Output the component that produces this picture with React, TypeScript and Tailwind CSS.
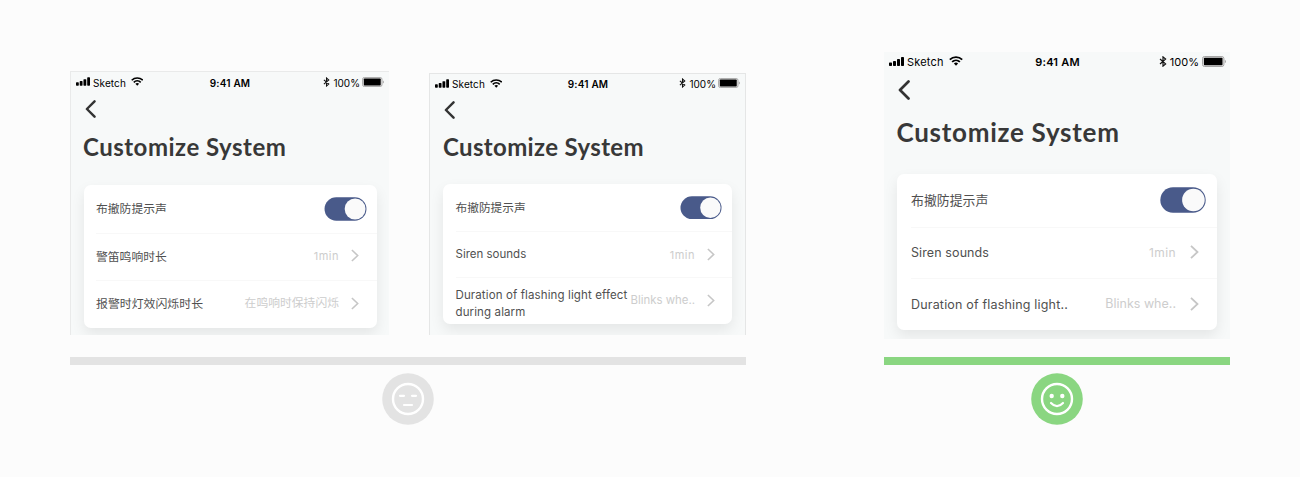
import React from "react";

type Row = { label: React.ReactNode; value?: string; labelClass: string; valueClass?: string; rowClass: string };

type PhoneProps = {
  frame: string;
  status: string;
  carrier: string;
  time: string;
  percent: string;
  iconSignal: string;
  iconWifi: string;
  iconBluetooth: string;
  iconBattery: string;
  back: string;
  title: string;
  card: string;
  toggle: string;
  arrow: string;
  rows: Row[];
};

function Signal({ className }: { className: string }) {
  return (
    <svg viewBox="0 0 15 9" className={className} fill="#000">
      <rect x="0" y="5.4" width="3" height="3.6" rx="0.7" />
      <rect x="4" y="4" width="3" height="5" rx="0.7" />
      <rect x="8" y="2" width="3" height="7" rx="0.7" />
      <rect x="12" y="0" width="3" height="9" rx="0.7" />
    </svg>
  );
}

function Wifi({ className }: { className: string }) {
  return (
    <svg viewBox="0 0 14 10" className={className} fill="none" stroke="#000" strokeWidth="1.8">
      <path d="M0.8 3.6a8.9 8.9 0 0 1 12.4 0" />
      <path d="M3.1 5.9a5.7 5.7 0 0 1 7.8 0" />
      <path d="M4.9 7.5a3.2 3.2 0 0 1 4.2 0L7 9.7z" fill="#000" stroke="none" />
    </svg>
  );
}

function Bluetooth({ className }: { className: string }) {
  return (
    <svg viewBox="0 0 8 11" className={className} fill="none" stroke="#111" strokeWidth="1.2">
      <path d="M1 3l5.6 4.9L4 10.1V0.9l2.6 2.2L1 8" />
    </svg>
  );
}

function Battery({ className }: { className: string }) {
  return (
    <svg viewBox="0 0 24 11" className={className}>
      <rect x="0.5" y="0.5" width="21.4" height="10" rx="2" fill="#e6e6e6" stroke="#a6a6a6" />
      <rect x="1.9" y="1.7" width="18.6" height="7.6" rx="0.7" fill="#000" />
      <path d="M22.8 3.8q1.2 0.4 1.2 1.7t-1.2 1.7z" fill="#a6a6a6" />
    </svg>
  );
}

function Arrow({ className }: { className: string }) {
  return (
    <svg viewBox="0 0 9 14" className={className} fill="none" stroke="#c6c6c6" strokeWidth="1.8">
      <path d="M1 0.8l6.5 6.2L1 13.2" />
    </svg>
  );
}

function Toggle({ className }: { className: string }) {
  return (
    <svg viewBox="0 0 46 26" className={className}>
      <rect x="0.3" y="0.3" width="45.4" height="25.4" rx="12.7" fill="#495a8a" />
      <circle cx="33.4" cy="13" r="11.3" fill="#fafafa" />
    </svg>
  );
}

function Phone(p: PhoneProps) {
  return (
    <section className={`shrink-0 overflow-hidden bg-[#f7f9f9] ${p.frame}`}>
      <div className={`grid grid-cols-[1fr_auto_1fr] items-center whitespace-nowrap text-black ${p.status}`}>
        <div className="flex items-center">
          <Signal className={p.iconSignal} />
          <span className={p.carrier}>Sketch</span>
          <Wifi className={p.iconWifi} />
        </div>
        <span className={`font-semibold ${p.time}`}>9:41 AM</span>
        <div className="flex items-center justify-end">
          <Bluetooth className={p.iconBluetooth} />
          <span className={p.percent}>100%</span>
          <Battery className={p.iconBattery} />
        </div>
      </div>
      <svg viewBox="0 0 12 20" className={p.back} fill="none" stroke="#333" strokeWidth="2.7" strokeLinecap="round" strokeLinejoin="round">
        <path d="M10.5 1.5L2 10l8.5 8.5" />
      </svg>
      <h1 className={`font-['Lato',sans-serif] font-bold whitespace-nowrap text-[#383838] ${p.title}`}>Customize System</h1>
      <div className={`bg-white shadow-[0_6px_14px_rgba(0,0,0,0.08)] ${p.card}`}>
        {p.rows.map((r, i) => (
          <div key={i} className={`flex items-center whitespace-nowrap ${i > 0 ? "border-t border-[#f8f8f8]" : ""} ${r.rowClass}`}>
            <span className={`text-[#505050] ${r.labelClass}`}>{r.label}</span>
            {r.value ? (
              <>
                <span className={`ml-auto text-[#cdcdcd] ${r.valueClass}`}>{r.value}</span>
                <Arrow className={p.arrow} />
              </>
            ) : (
              <Toggle className={p.toggle} />
            )}
          </div>
        ))}
      </div>
    </section>
  );
}

function Verdict({ good }: { good: boolean }) {
  return (
    <svg viewBox="0 0 52 52" className="mx-auto mt-2 h-[52px] w-[52px]">
      <circle cx="26" cy="26" r="25.8" fill={good ? "#8ad681" : "#e3e3e3"} />
      <circle cx="26" cy="26" r="15" fill="none" stroke="#fff" strokeWidth="2.4" />
      {good ? (
        <>
          <circle cx="20.7" cy="23" r="2.2" fill="#fff" />
          <circle cx="31.3" cy="23" r="2.2" fill="#fff" />
          <path d="M20 30q6 6.4 12 0" fill="none" stroke="#fff" strokeWidth="2.2" strokeLinecap="round" />
        </>
      ) : (
        <path d="M18 22.8h4M30 22.8h4M22 32h8" stroke="#fff" strokeWidth="2.2" strokeLinecap="round" />
      )}
    </svg>
  );
}

export default function App() {
  return (
    <main className="flex h-[477px] w-[1300px] overflow-hidden bg-[#fcfcfc] font-['Inter','Noto_Sans_CJK_SC',sans-serif]">
      <div className="ml-[70px] w-[676px]">
        <div className="flex h-[335px] items-end justify-between">
          <Phone
            frame="h-[264px] w-[319px] border-t border-l border-[#e9eaea]"
            status="h-[19px] pl-[5px] pr-[5px]"
            carrier="ml-[3px] mt-[3px] text-[10px] tracking-[0.1px]"
            time="mt-[4px] text-[10px] tracking-[0.2px]"
            percent="ml-[3px] mt-[3px] text-[10px]"
            iconSignal="h-[9px] w-[14px]"
            iconWifi="ml-[5px] h-[9px] w-[12.5px]"
            iconBluetooth="h-[10px] w-[7px]"
            iconBattery="ml-[2px] h-[10px] w-[22px]"
            back="ml-[14px] mt-[9px] h-[18px] w-[11px]"
            title="ml-[12px] mt-[14px] text-[24px] leading-[30px] tracking-[0.5px]"
            card="ml-[12.5px] mt-[22.5px] h-[143px] w-[293px] rounded-[7px] pl-[12.5px]"
            toggle="ml-auto mr-[10px] h-[24px] w-[43px]"
            arrow="mb-[2px] ml-[12px] mr-[17.5px] h-[13px] w-[8px]"
            rows={[
              { label: "布撤防提示声", labelClass: "mt-[2px] text-[11.8px]", rowClass: "h-[48px]" },
              { label: "警笛鸣响时长", value: "1min", labelClass: "mt-[2px] text-[11.8px]", valueClass: "text-[11px] tracking-[0.5px]", rowClass: "h-[47px]" },
              { label: "报警时灯效闪烁时长", value: "在鸣响时保持闪烁", labelClass: "text-[11.9px]", valueClass: "text-[11.8px]", rowClass: "h-[48px]" },
            ]}
          />
          <Phone
            frame="h-[262px] w-[317px] border-x border-t border-[#e5e6e6]"
            status="h-[18px] pl-[5px] pr-[5px]"
            carrier="ml-[3px] mt-[3px] text-[10px] tracking-[0.1px]"
            time="ml-px mt-[3px] text-[10px] tracking-[0.2px]"
            percent="ml-[3px] mt-[3px] text-[10px]"
            iconSignal="h-[9px] w-[14px]"
            iconWifi="ml-[5px] h-[9px] w-[12.5px]"
            iconBluetooth="h-[10px] w-[7px]"
            iconBattery="ml-[2px] h-[10px] w-[22px]"
            back="ml-[14px] mt-[9px] h-[18px] w-[11px]"
            title="ml-[13px] mt-[13px] text-[24px] leading-[30px] tracking-[0.35px]"
            card="ml-[13px] mt-[22px] h-[140px] w-[289px] rounded-[7px] pl-[12.5px]"
            toggle="ml-auto mr-[10px] h-[23.5px] w-[42px]"
            arrow="mb-[1px] ml-[12px] mr-[17px] h-[13px] w-[8px]"
            rows={[
              { label: "布撤防提示声", labelClass: "mt-[3px] text-[11.7px]", rowClass: "h-[47px]" },
              { label: "Siren sounds", value: "1min", labelClass: "mt-px text-[11.5px]", valueClass: "mt-px text-[11px] tracking-[0.5px]", rowClass: "h-[46px]" },
              {
                label: (
                  <>
                    Duration of flashing light effect
                    <br />
                    during alarm
                  </>
                ),
                value: "Blinks whe..",
                labelClass: "mt-[6px] w-[172px] text-[11.5px] leading-[16.5px] tracking-[0.12px]",
                valueClass: "mt-px text-[11.4px]",
                rowClass: "h-[46px]",
              },
            ]}
          />
        </div>
        <div className="mt-[22px] h-2 bg-[#e3e3e3]" />
        <Verdict good={false} />
      </div>
      <div className="ml-[138px] w-[346px]">
        <div className="h-[339px] pt-[52px]">
          <Phone
            frame="h-[287px] w-[346px]"
            status="h-[18px] pl-[5px] pr-[4px]"
            carrier="ml-[3px] mt-[2px] text-[11px] tracking-[0.2px]"
            time="mt-[2px] text-[11px] tracking-[0.2px]"
            percent="ml-[3px] mt-[2px] text-[11px]"
            iconSignal="h-[9px] w-[15px]"
            iconWifi="ml-[5.5px] h-[10px] w-[14px]"
            iconBluetooth="h-[11px] w-[8px]"
            iconBattery="ml-[3px] h-[11px] w-[24px]"
            back="ml-[14px] mt-[10px] h-[20px] w-[12px]"
            title="ml-[12.5px] mt-[15px] text-[26px] leading-[34px] tracking-[0.72px]"
            card="ml-[13px] mt-[25px] h-[156px] w-[320px] rounded-[7px] pl-[14px]"
            toggle="mb-[1px] ml-auto mr-[11px] h-[26px] w-[46px]"
            arrow="mb-[2px] ml-[14px] mr-[18px] h-[14px] w-[9px]"
            rows={[
              { label: "布撤防提示声", labelClass: "text-[12.9px]", rowClass: "h-[53px]" },
              { label: "Siren sounds", value: "1min", labelClass: "text-[12.5px] tracking-[0.1px]", valueClass: "text-[12px] tracking-[0.4px]", rowClass: "h-[51px]" },
              { label: "Duration of flashing light..", value: "Blinks whe..", labelClass: "mt-px text-[12.5px] tracking-[0.18px]", valueClass: "text-[12.5px]", rowClass: "h-[52px]" },
            ]}
          />
        </div>
        <div className="mt-[18px] h-2 bg-[#8ad681]" />
        <Verdict good />
      </div>
    </main>
  );
}
